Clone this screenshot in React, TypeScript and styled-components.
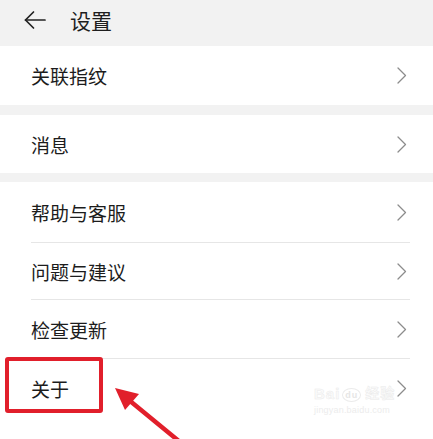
import styled, { createGlobalStyle } from 'styled-components';

const GlobalStyle = createGlobalStyle`
  html, body {
    margin: 0;
    padding: 0;
    background: #ffffff;
  }
  * {
    box-sizing: border-box;
  }
`;

const Page = styled.div`
  position: relative;
  width: 433px;
  height: 439px;
  overflow: hidden;
  background: #f2f2f2;
  font-family: 'Noto Sans CJK SC', 'Noto Sans', sans-serif;
  color: #1c1c1c;
`;

const Header = styled.header`
  height: 46px;
  display: flex;
  align-items: center;
  padding-left: 23px;
  padding-bottom: 6px;
  gap: 23px;
  background: #f2f2f2;
  h1 {
    margin: 0;
    font-size: 21px;
    font-weight: 400;
    color: #1e1e1e;
    line-height: 1;
  }
`;

const Group = styled.ul<{ $gap: number }>`
  list-style: none;
  margin: 0 0 ${({ $gap }) => $gap}px;
  padding: 0;
  background: #ffffff;
`;

const LastGroup = styled(Group)`
  height: 300px;
`;

const Row = styled.li<{ $h: number }>`
  height: ${({ $h }) => $h}px;
  margin-left: 31px;
  margin-right: 23px;
  display: flex;
  align-items: center;
  justify-content: space-between;
  font-size: 19px;
  border-bottom: 1px solid #e6e6e6;
  &:last-child {
    border-bottom: none;
  }
  svg {
    margin-right: 3px;
  }
`;

const Highlight = styled.div`
  position: absolute;
  left: 5px;
  top: 357px;
  width: 98px;
  height: 56px;
  border: 4px solid #e11f2b;
  border-radius: 3px;
`;

const Pointer = styled.svg`
  position: absolute;
  left: 110px;
  top: 380px;
`;

const Watermark = styled.div`
  position: absolute;
  left: 314px;
  top: 382px;
  font-family: 'Liberation Sans', sans-serif;
  .brand {
    display: flex;
    align-items: flex-end;
    font-size: 15px;
    font-weight: 700;
    letter-spacing: 1px;
    -webkit-text-stroke: 0.5px #ebebeb;
    color: #fbfbfb;
  }
  .paw {
    font-size: 9px;
    border: 1px solid #ebebeb;
    border-radius: 50%;
    padding: 1px 2px;
    margin: 0 2px;
    -webkit-text-stroke: 0;
    color: #e6e6e6;
  }
  .jy {
    font-family: 'Noto Sans CJK SC', sans-serif;
    font-size: 14px;
    margin-left: 2px;
  }
  .url {
    font-size: 9px;
    color: #ececec;
    margin-top: 3px;
    letter-spacing: 0.2px;
  }
`;

const Back = () => (
  <svg width="24" height="20" viewBox="0 0 24 20" fill="none" stroke="#222" strokeWidth="1.7" strokeLinecap="round" strokeLinejoin="round">
    <path d="M22 10H2.5" />
    <path d="M10.5 2L2.5 10l8 8" />
  </svg>
);

const Chevron = () => (
  <svg width="10" height="17" viewBox="0 0 10 17" fill="none" stroke="#8c8c8c" strokeWidth="1.3" strokeLinecap="round" strokeLinejoin="round">
    <path d="M1 1l7.5 7.5L1 16" />
  </svg>
);

interface Item {
  label: string;
  h: number;
}

const groups: { items: Item[]; gap: number }[] = [
  { items: [{ label: '关联指纹', h: 59 }], gap: 10 },
  { items: [{ label: '消息', h: 58 }], gap: 9 },
];

const last: Item[] = [
  { label: '帮助与客服', h: 61 },
  { label: '问题与建议', h: 57 },
  { label: '检查更新', h: 59 },
  { label: '关于', h: 59 },
];

export default function App() {
  return (
    <Page>
      <GlobalStyle />
      <Header>
        <Back />
        <h1>设置</h1>
      </Header>
      {groups.map((g, i) => (
        <Group key={i} $gap={g.gap}>
          {g.items.map((it) => (
            <Row key={it.label} $h={it.h}>
              <span>{it.label}</span>
              <Chevron />
            </Row>
          ))}
        </Group>
      ))}
      <LastGroup $gap={0}>
        {last.map((it) => (
          <Row key={it.label} $h={it.h}>
            <span>{it.label}</span>
            <Chevron />
          </Row>
        ))}
      </LastGroup>
      <Watermark>
        <div className="brand">
          Bai<span className="paw">du</span>
          <span className="jy">经验</span>
        </div>
        <div className="url">jingyan.baidu.com</div>
      </Watermark>
      <Highlight />
      <Pointer width="80" height="60" viewBox="0 0 80 60">
        <path d="M70 62L14 16" stroke="#e11f2b" strokeWidth="4.5" strokeLinecap="round" />
        <path d="M5 8L29 14L15 30Z" fill="#e11f2b" />
      </Pointer>
    </Page>
  );
}
